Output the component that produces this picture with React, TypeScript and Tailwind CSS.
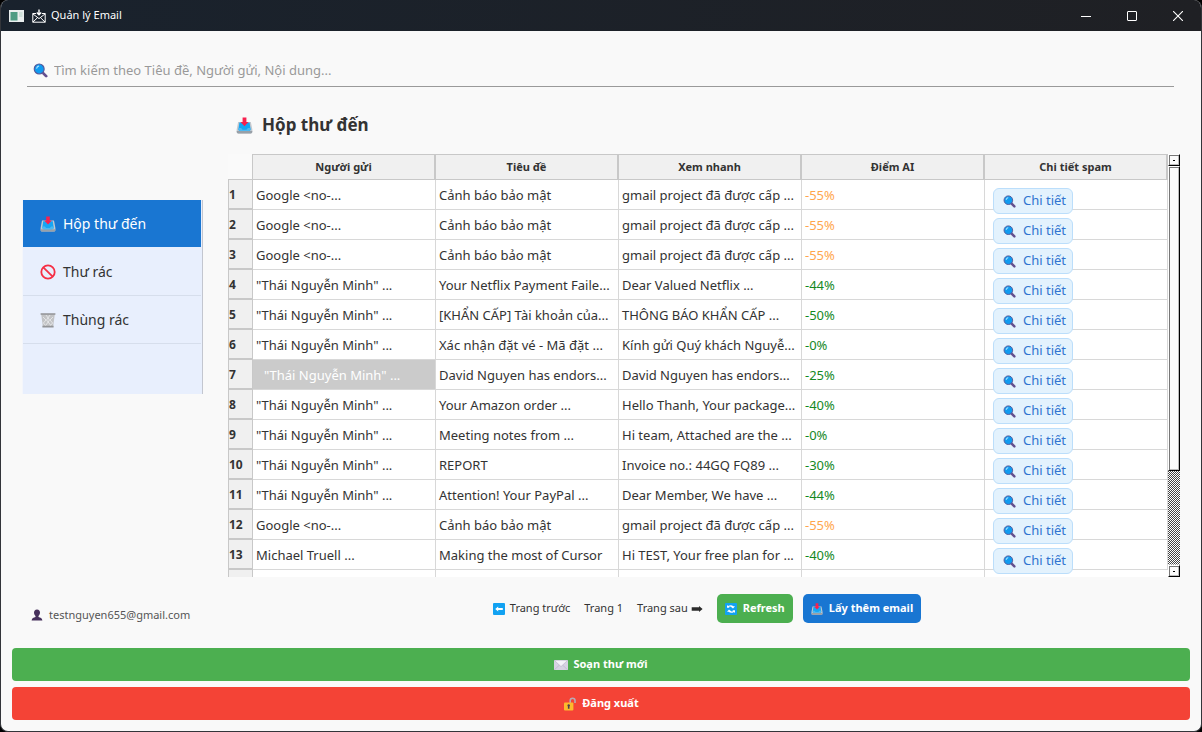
import type { ReactNode } from "react";

type Mail = {
  from: string;
  subject: string;
  preview: string;
  score: string;
  warn?: boolean;
  selected?: boolean;
};

const THAI = '"Thái Nguyễn Minh" ...';

const MAILS: Mail[] = [
  { from: "Google <no-...", subject: "Cảnh báo bảo mật", preview: "gmail project đã được cấp ...", score: "-55%", warn: true },
  { from: "Google <no-...", subject: "Cảnh báo bảo mật", preview: "gmail project đã được cấp ...", score: "-55%", warn: true },
  { from: "Google <no-...", subject: "Cảnh báo bảo mật", preview: "gmail project đã được cấp ...", score: "-55%", warn: true },
  { from: THAI, subject: "Your Netflix Payment Faile...", preview: "Dear Valued Netflix ...", score: "-44%" },
  { from: THAI, subject: "[KHẨN CẤP] Tài khoản của...", preview: "THÔNG BÁO KHẨN CẤP ...", score: "-50%" },
  { from: THAI, subject: "Xác nhận đặt vé - Mã đặt ...", preview: "Kính gửi Quý khách Nguyễ...", score: "-0%" },
  { from: THAI, subject: "David Nguyen has endors...", preview: "David Nguyen has endors...", score: "-25%", selected: true },
  { from: THAI, subject: "Your Amazon order ...", preview: "Hello Thanh, Your package...", score: "-40%" },
  { from: THAI, subject: "Meeting notes from ...", preview: "Hi team, Attached are the ...", score: "-0%" },
  { from: THAI, subject: "REPORT", preview: "Invoice no.: 44GQ FQ89 ...", score: "-30%" },
  { from: THAI, subject: "Attention! Your PayPal ...", preview: "Dear Member, We have ...", score: "-44%" },
  { from: "Google <no-...", subject: "Cảnh báo bảo mật", preview: "gmail project đã được cấp ...", score: "-55%", warn: true },
  { from: "Michael Truell ...", subject: "Making the most of Cursor", preview: "Hi TEST, Your free plan for ...", score: "-40%" },
];

const COLUMNS = ["Người gửi", "Tiêu đề", "Xem nhanh", "Điểm AI", "Chi tiết spam"];

function SearchIcon({ className }: { className: string }) {
  return (
    <svg viewBox="0 0 16 16" className={className} aria-hidden="true">
      <path d="M10 10l4 4" stroke="#64508f" strokeWidth="3" strokeLinecap="round" />
      <circle cx="6.6" cy="6.4" r="5.3" fill="#0f9bf0" stroke="#55599a" strokeWidth="1.2" />
      <path d="M4 5.400a3 3 0 0 1 2-2" stroke="#a8e0ff" strokeWidth="1.300" fill="none" strokeLinecap="round" />
    </svg>
  );
}

function InboxIcon({ className }: { className: string }) {
  return (
    <svg viewBox="0 0 16 16" className={className} aria-hidden="true">
      <path d="M2 4.600h12l1.400 7.400v2.200q0 1.400-1.400 1.400H2Q.6 15.600.6 14.200V12z" fill="#c3c8ce" />
      <path d="M.7 13.200h14.600v1q0 1.400-1.300 1.400H2Q.7 15.600.7 14.200z" fill="#98a0a8" />
      <path d="M3.200 5.200h9.600l.9 6.400q0 1.600-1.600 1.600H3.900q-1.600 0-1.600-1.600z" fill="#16a6f5" />
      <path d="M2.500 10.400h2.300l1.400 1.500h3.600l1.400-1.500h2.300l.2 1.200q0 1.600-1.600 1.600H3.900q-1.600 0-1.600-1.600z" fill="#4db9f2" />
      <path d="M6.200.400h3.600v4.200h2L8 8.600 4.200 4.600h2z" fill="#f8214f" />
    </svg>
  );
}

function BlockedIcon({ className }: { className: string }) {
  return (
    <svg viewBox="0 0 16 16" className={className} aria-hidden="true">
      <circle cx="8" cy="8" r="6.700" fill="none" stroke="#f52f45" strokeWidth="1.800" />
      <path d="M3.300 3.300l9.400 9.400" stroke="#f52f45" strokeWidth="1.800" />
    </svg>
  );
}

function TrashIcon({ className }: { className: string }) {
  return (
    <svg viewBox="0 0 16 16" className={className} aria-hidden="true">
      <path d="M1.200 2h13.600l-1.600 12.600H2.800z" fill="#c2c3c5" />
      <path d="M3 5l3 3-2.600 3 2.600 3M6 3l3.500 5L6 13M10 3L6.500 8l4 5M13 5l-3 3 2.600 3-2.600 3" stroke="#f1f2f4" strokeWidth=".7" fill="none" />
      <path d="M.6 1.200h14.800v1.600H.6zM2.400 13.800h11.200v1.600H2.400z" fill="#929497" />
    </svg>
  );
}

function UserIcon({ className }: { className: string }) {
  return (
    <svg viewBox="0 0 12 12" className={className} aria-hidden="true">
      <path d="M6 .4c2 0 3 1.400 3 3.200 0 1.500-.7 2.700-1.500 3.300v1.200c1.800.5 3.700 1 3.900 3.500H.6C.8 9.100 2.700 8.600 4.500 8.100V6.900C3.700 6.300 3 5.100 3 3.600 3 1.800 4 .4 6 .4z" fill="#46305c" />
    </svg>
  );
}

function LeftIcon({ className }: { className: string }) {
  return (
    <svg viewBox="0 0 12 12" className={className} aria-hidden="true">
      <rect width="12" height="12" rx="1" fill="#12a2f2" />
      <path d="M2.200 6l3-2.400v1.500h4.600v1.800H5.200v1.500z" fill="#fff" />
    </svg>
  );
}

function RightIcon({ className }: { className: string }) {
  return (
    <svg viewBox="0 0 12 12" className={className} aria-hidden="true">
      <path d="M.7 4.200H8V3l3.600 3L8 9V7.800H.7z" fill="#2c2c2c" />
    </svg>
  );
}

function RefreshIcon({ className }: { className: string }) {
  return (
    <svg viewBox="0 0 12 12" className={className} aria-hidden="true">
      <rect width="12" height="12" rx="1" fill="#12a2f2" />
      <path d="M2 4.800V2l1 1.100q3-1.800 5.400.2H10L8 5.600 5.800 3.800q-1.200-.5-2 .3l.9.7zM10 7.200V10L9 8.900q-3 1.800-5.400-.2H2l2-2.300 2.200 1.800q1.200.5 2-.3l-.9-.7z" fill="#fff" />
    </svg>
  );
}

function EnvelopeIcon({ className }: { className: string }) {
  return (
    <svg viewBox="0 0 14 10" className={className} aria-hidden="true">
      <rect width="14" height="10" rx=".6" fill="#d6d2e2" />
      <path d="M.3 9.800l5-4.600M13.700 9.800l-5-4.600" stroke="#b9b4c8" strokeWidth=".7" />
      <path d="M.2.2h13.600L7 6.600z" fill="#f4f3f8" stroke="#b5b0c5" strokeWidth=".6" />
    </svg>
  );
}

function UnlockIcon({ className }: { className: string }) {
  return (
    <svg viewBox="0 0 14 14" className={className} aria-hidden="true">
      <path d="M7.200 6V3.600a2.400 2.400 0 0 1 4.800 0V6" fill="none" stroke="#b9a9b3" strokeWidth="1.600" />
      <rect x="1" y="5.400" width="9.400" height="8" rx="1" fill="#fdb92c" />
      <path d="M5.700 7.200a1.300 1.300 0 0 1 .8 2.300v2.300H4.900V9.500a1.300 1.300 0 0 1 .8-2.300z" fill="#4a3f4f" />
    </svg>
  );
}

function TitleBar() {
  return (
    <header className="flex h-[31px] shrink-0 items-center bg-gradient-to-r from-[#19222d] to-[#1f2024] pl-2 text-white">
      <svg viewBox="0 0 15 12" className="h-3 w-[15px]" aria-hidden="true">
        <rect width="15" height="12" fill="#e9eeee" />
        <rect x="1.500" y="2" width="7" height="8.500" fill="#4d9c83" />
        <rect x="10" y="2" width="3.500" height="5" fill="#cfe0da" />
      </svg>
      <svg viewBox="0 0 14 14" className="ml-2 size-3.5" fill="none" stroke="#fff" strokeWidth="1" aria-hidden="true">
        <path d="M4 4.500H.8v8.700h12.400V4.500H10M.8 4.800L7 9.600l6.200-4.800M.8 13.200L5.600 8.600M13.200 13.200L8.400 8.600" />
        <path d="M7 .5v5M4.800 3.600L7 5.800l2.200-2.200" strokeWidth="1.400" />
      </svg>
      <h1 className="ml-[5px] text-[11px]">Quản lý Email</h1>
      <div className="ml-auto flex h-full">
        <button type="button" aria-label="Thu nhỏ" className="flex w-[46px] items-center justify-center">
          <svg viewBox="0 0 10 10" className="size-2.5" aria-hidden="true"><path d="M0 5.500h10" stroke="#fff" /></svg>
        </button>
        <button type="button" aria-label="Phóng to" className="flex w-[46px] items-center justify-center">
          <svg viewBox="0 0 10 10" className="size-2.5" aria-hidden="true"><rect x=".5" y=".5" width="9" height="9" rx=".5" fill="none" stroke="#fff" /></svg>
        </button>
        <button type="button" aria-label="Đóng" className="flex w-[46px] items-center justify-center">
          <svg viewBox="0 0 10 10" className="size-2.5" aria-hidden="true"><path d="M0 0l10 10M10 0L0 10" stroke="#fff" strokeWidth="1.100" /></svg>
        </button>
      </div>
    </header>
  );
}

function FolderButton({ icon, label, active }: { icon: ReactNode; label: string; active?: boolean }) {
  return (
    <li>
      <button
        type="button"
        aria-current={active ? "page" : undefined}
        className={
          active
            ? "flex h-12 w-full items-center gap-[7px] border-b border-[#e8effd] bg-[#1976d2] pl-[17px] text-sm text-white"
            : "flex h-12 w-full items-center gap-[7px] border-b border-[#d6deec] pl-[17px] text-sm text-[#333]"
        }
      >
        {icon}
        {label}
      </button>
    </li>
  );
}

function MailRow({ mail, index }: { mail: Mail; index: number }) {
  const cell = "overflow-hidden border-r border-b border-[#d8d8d8] px-[3px] pt-0.5 whitespace-nowrap";
  return (
    <tr className="h-[30px]">
      <th scope="row" className="border-x border-b-2 border-[#c8c8c8] bg-[#f0f0f0] pt-0.5 text-left text-xs font-bold">{index}</th>
      <td className={mail.selected ? "overflow-hidden border-r border-b border-[#d8d8d8] bg-[#cbcbcb] pt-0.5 pl-[11px] whitespace-nowrap text-white" : cell}>{mail.from}</td>
      <td className={cell}>{mail.subject}</td>
      <td className={cell}>{mail.preview}</td>
      <td className={mail.warn ? `${cell} text-[#ffa64d]` : `${cell} text-[#15891f]`}>{mail.score}</td>
      <td className="border-r border-b border-[#d8d8d8] pl-2 align-top">
        <div className="h-[29px] pt-2">
          <button type="button" className="flex h-[26px] w-20 items-center gap-[7px] rounded-md border border-[#bbdefb] bg-[#e3f2fd] pl-[9px] whitespace-nowrap text-[#2f74d0]">
            <SearchIcon className="size-[13px] shrink-0" />
            Chi tiết
          </button>
        </div>
      </td>
    </tr>
  );
}

function ScrollBar() {
  const raised = "border border-t-white border-l-white border-r-black border-b-black bg-[#fbfbfb] shadow-[inset_1px_1px_0_#777,inset_-1px_-1px_0_#bbb]";
  return (
    <div className="flex w-3 shrink-0 flex-col" aria-hidden="true">
      <div className={`${raised} flex h-3 shrink-0 items-center justify-center`}><span className="h-px w-0.5 bg-black" /></div>
      <div className={`${raised} grow-[305] basis-0`} />
      <svg className="h-0 w-3 grow-[94] basis-0">
        <defs>
          <pattern id="dither" width="2" height="2" patternUnits="userSpaceOnUse">
            <rect width="2" height="2" fill="#fff" />
            <rect width="1" height="1" fill="#444" />
            <rect x="1" y="1" width="1" height="1" fill="#444" />
          </pattern>
        </defs>
        <rect width="100%" height="100%" fill="url(#dither)" />
      </svg>
      <div className={`${raised} flex h-3 shrink-0 items-center justify-center`}><span className="h-px w-0.5 bg-black" /></div>
    </div>
  );
}

export default function App() {
  return (
    <div className="h-screen bg-black font-['Noto_Sans','Open_Sans',sans-serif] text-[#333]">
      <div className="flex h-full flex-col overflow-hidden rounded-lg border border-t-0 border-[#33353a] bg-[#f9f9f9]">
        <TitleBar />

        <label className="mr-[27px] ml-[26px] mt-6 flex h-8 shrink-0 items-center gap-[6px] border-b border-[#9a9a9a] pl-1.5">
          <SearchIcon className="size-[15px] shrink-0" />
          <input
            type="search"
            aria-label="Tìm kiếm"
            placeholder="Tìm kiếm theo Tiêu đề, Người gửi, Nội dung..."
            className="min-w-0 flex-1 bg-transparent text-[13px] outline-none placeholder:text-[#999]"
          />
        </label>

        <div className="flex min-h-0 flex-1 gap-[25px] pr-[21px] pl-[21px]">
          <aside className="flex w-[181px] shrink-0 flex-col pt-[113px] pb-[23px]">
            <nav aria-label="Thư mục" className="h-[194px] border-r border-l border-r-[#c3c6cf] border-l-[#f4f6fb] bg-[#e8effd] pr-px">
              <ul>
                <FolderButton active icon={<InboxIcon className="size-4" />} label="Hộp thư đến" />
                <FolderButton icon={<BlockedIcon className="size-4" />} label="Thư rác" />
                <FolderButton icon={<TrashIcon className="size-4" />} label="Thùng rác" />
              </ul>
            </nav>
            <p className="mt-auto flex items-center gap-[6px] pl-[9px] text-[11px] leading-5 text-[#555]">
              <UserIcon className="size-3 shrink-0" />
              testnguyen655@gmail.com
            </p>
          </aside>

          <main className="flex min-w-0 flex-1 flex-col pt-5 pb-[25px]">
            <h2 className="flex h-9 shrink-0 items-center gap-[9px] pl-2 text-[17px] font-bold">
              <InboxIcon className="size-[17px]" />
              Hộp thư đến
            </h2>

            <div className="mt-[11px] flex min-h-0 flex-1">
              <div className="min-w-0 flex-1 overflow-hidden">
                <table className="w-full table-fixed border-separate border-spacing-0 bg-white text-[13px]">
                  <colgroup>
                    <col className="w-[25px]" />
                    <col />
                    <col />
                    <col />
                    <col />
                    <col />
                  </colgroup>
                  <thead>
                    <tr className="h-[26px] text-[11px]">
                      <td className="border-r border-b border-[#c8c8c8] bg-[#fafafa]" />
                      {COLUMNS.map((name) => (
                        <th key={name} scope="col" className="border-t border-r-2 border-b border-[#c8c8c8] bg-[#f0f0f0] font-bold">{name}</th>
                      ))}
                    </tr>
                  </thead>
                  <tbody>
                    {MAILS.map((mail, i) => (
                      <MailRow key={i} mail={mail} index={i + 1} />
                    ))}
                    <tr className="h-[30px]">
                      <td className="border-x border-[#c8c8c8] bg-[#f0f0f0]" />
                      <td className="border-r border-[#d8d8d8]" />
                      <td className="border-r border-[#d8d8d8]" />
                      <td className="border-r border-[#d8d8d8]" />
                      <td className="border-r border-[#d8d8d8]" />
                      <td />
                    </tr>
                  </tbody>
                </table>
              </div>
              <ScrollBar />
            </div>

            <div className="mt-[17px] flex h-[29px] shrink-0 items-center justify-center pl-1.5 text-[11px]">
              <button type="button" className="flex items-center gap-[5px]">
                <LeftIcon className="size-3" />
                Trang trước
              </button>
              <span className="ml-3.5">Trang 1</span>
              <button type="button" className="ml-3.5 flex items-center gap-[3px]">
                Trang sau
                <RightIcon className="size-3" />
              </button>
              <button type="button" className="ml-3.5 flex h-full items-center gap-[6px] rounded-[5px] bg-[#4caf50] px-2 font-bold text-white">
                <RefreshIcon className="size-3" />
                Refresh
              </button>
              <button type="button" className="ml-[10px] flex h-full items-center gap-[6px] rounded-[5px] bg-[#1976d2] px-2 font-bold text-white">
                <InboxIcon className="size-3" />
                Lấy thêm email
              </button>
            </div>
          </main>
        </div>

        <div className="flex shrink-0 flex-col gap-1.5 px-[11px] pb-[11px] text-[11px] font-bold text-white">
          <button type="button" className="flex h-[33px] items-center justify-center gap-[5px] rounded bg-[#4caf50]">
            <EnvelopeIcon className="h-[10px] w-3.5" />
            Soạn thư mới
          </button>
          <button type="button" className="flex h-[33px] items-center justify-center gap-[5px] rounded bg-[#f44336]">
            <UnlockIcon className="size-3.5" />
            Đăng xuất
          </button>
        </div>
      </div>
    </div>
  );
}
